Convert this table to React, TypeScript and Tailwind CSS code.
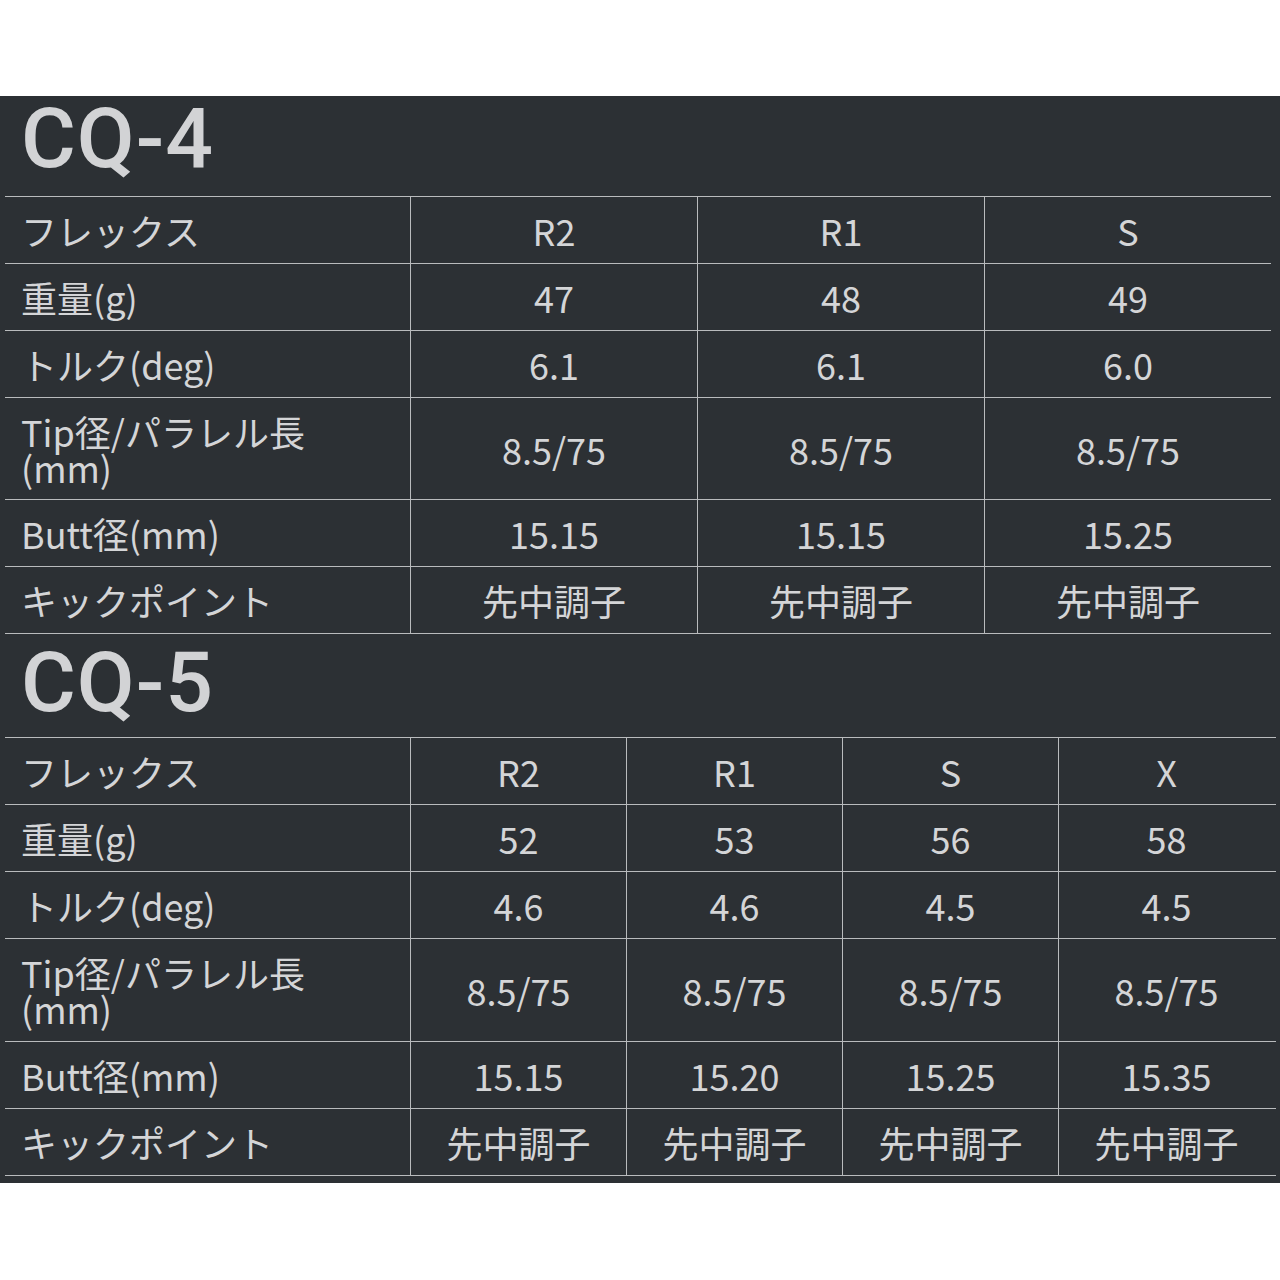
import type { FC } from 'react';

interface SpecRow {
  label: string[];
  values: string[];
  tall?: boolean;
}

interface SpecTableProps {
  title: string;
  rows: SpecRow[];
  width: string;
  colWidth: string;
  titleClass: string;
  tallHeight: string;
}

const cq4: SpecRow[] = [
  { label: ['フレックス'], values: ['R2', 'R1', 'S'] },
  { label: ['重量(g)'], values: ['47', '48', '49'] },
  { label: ['トルク(deg)'], values: ['6.1', '6.1', '6.0'] },
  { label: ['Tip径/パラレル長', '(mm)'], values: ['8.5/75', '8.5/75', '8.5/75'], tall: true },
  { label: ['Butt径(mm)'], values: ['15.15', '15.15', '15.25'] },
  { label: ['キックポイント'], values: ['先中調子', '先中調子', '先中調子'] },
];

const cq5: SpecRow[] = [
  { label: ['フレックス'], values: ['R2', 'R1', 'S', 'X'] },
  { label: ['重量(g)'], values: ['52', '53', '56', '58'] },
  { label: ['トルク(deg)'], values: ['4.6', '4.6', '4.5', '4.5'] },
  { label: ['Tip径/パラレル長', '(mm)'], values: ['8.5/75', '8.5/75', '8.5/75', '8.5/75'], tall: true },
  { label: ['Butt径(mm)'], values: ['15.15', '15.20', '15.25', '15.35'] },
  { label: ['キックポイント'], values: ['先中調子', '先中調子', '先中調子', '先中調子'] },
];

const SpecTable: FC<SpecTableProps> = ({ title, rows, width, colWidth, titleClass, tallHeight }) => (
  <div>
    <div className={`${titleClass} pl-[21px]`}>
      <h2
        className="text-[84px] leading-none font-medium tracking-[1px] text-[#d2d3d5]"
        style={{ fontFamily: 'Roboto, "Noto Sans", sans-serif' }}
      >
        {title}
      </h2>
    </div>
    <div className={`${width} ml-[5px] border-t border-[#b9bbbd]`}>
      {rows.map((row) => (
        <div
          key={row.label.join('')}
          className={`flex border-b border-[#b9bbbd] ${row.tall ? tallHeight : 'h-[67px]'}`}
        >
          <div className="w-[405px] shrink-0 flex items-center pl-[16px] text-[36px] leading-[36px]">
            <p>
              {row.label.map((l, i) => (
                <span key={l}>
                  {i > 0 && <br />}
                  {l}
                </span>
              ))}
            </p>
          </div>
          {row.values.map((v, i) => (
            <div
              key={i}
              className={`${colWidth} shrink-0 border-l border-[#b9bbbd] flex items-center justify-center text-[36px]`}
            >
              {v}
            </div>
          ))}
        </div>
      ))}
    </div>
  </div>
);

export default function App() {
  return (
    <div
      className="w-[1280px] h-[1280px] bg-white pt-[96px]"
      style={{ fontFamily: '"Noto Sans CJK JP", "Noto Sans", sans-serif' }}
    >
      <div className="bg-[#2c3034] text-[#d4d5d7] pb-[7px]">
        <SpecTable
          title="CQ-4"
          rows={cq4}
          width="w-[1266px]"
          colWidth="w-[287px]"
          titleClass="h-[100px] pt-[1px]"
          tallHeight="h-[102px]"
        />
        <SpecTable
          title="CQ-5"
          rows={cq5}
          width="w-[1271px]"
          colWidth="w-[216px]"
          titleClass="h-[103px] pt-[7px]"
          tallHeight="h-[103px]"
        />
      </div>
    </div>
  );
}
